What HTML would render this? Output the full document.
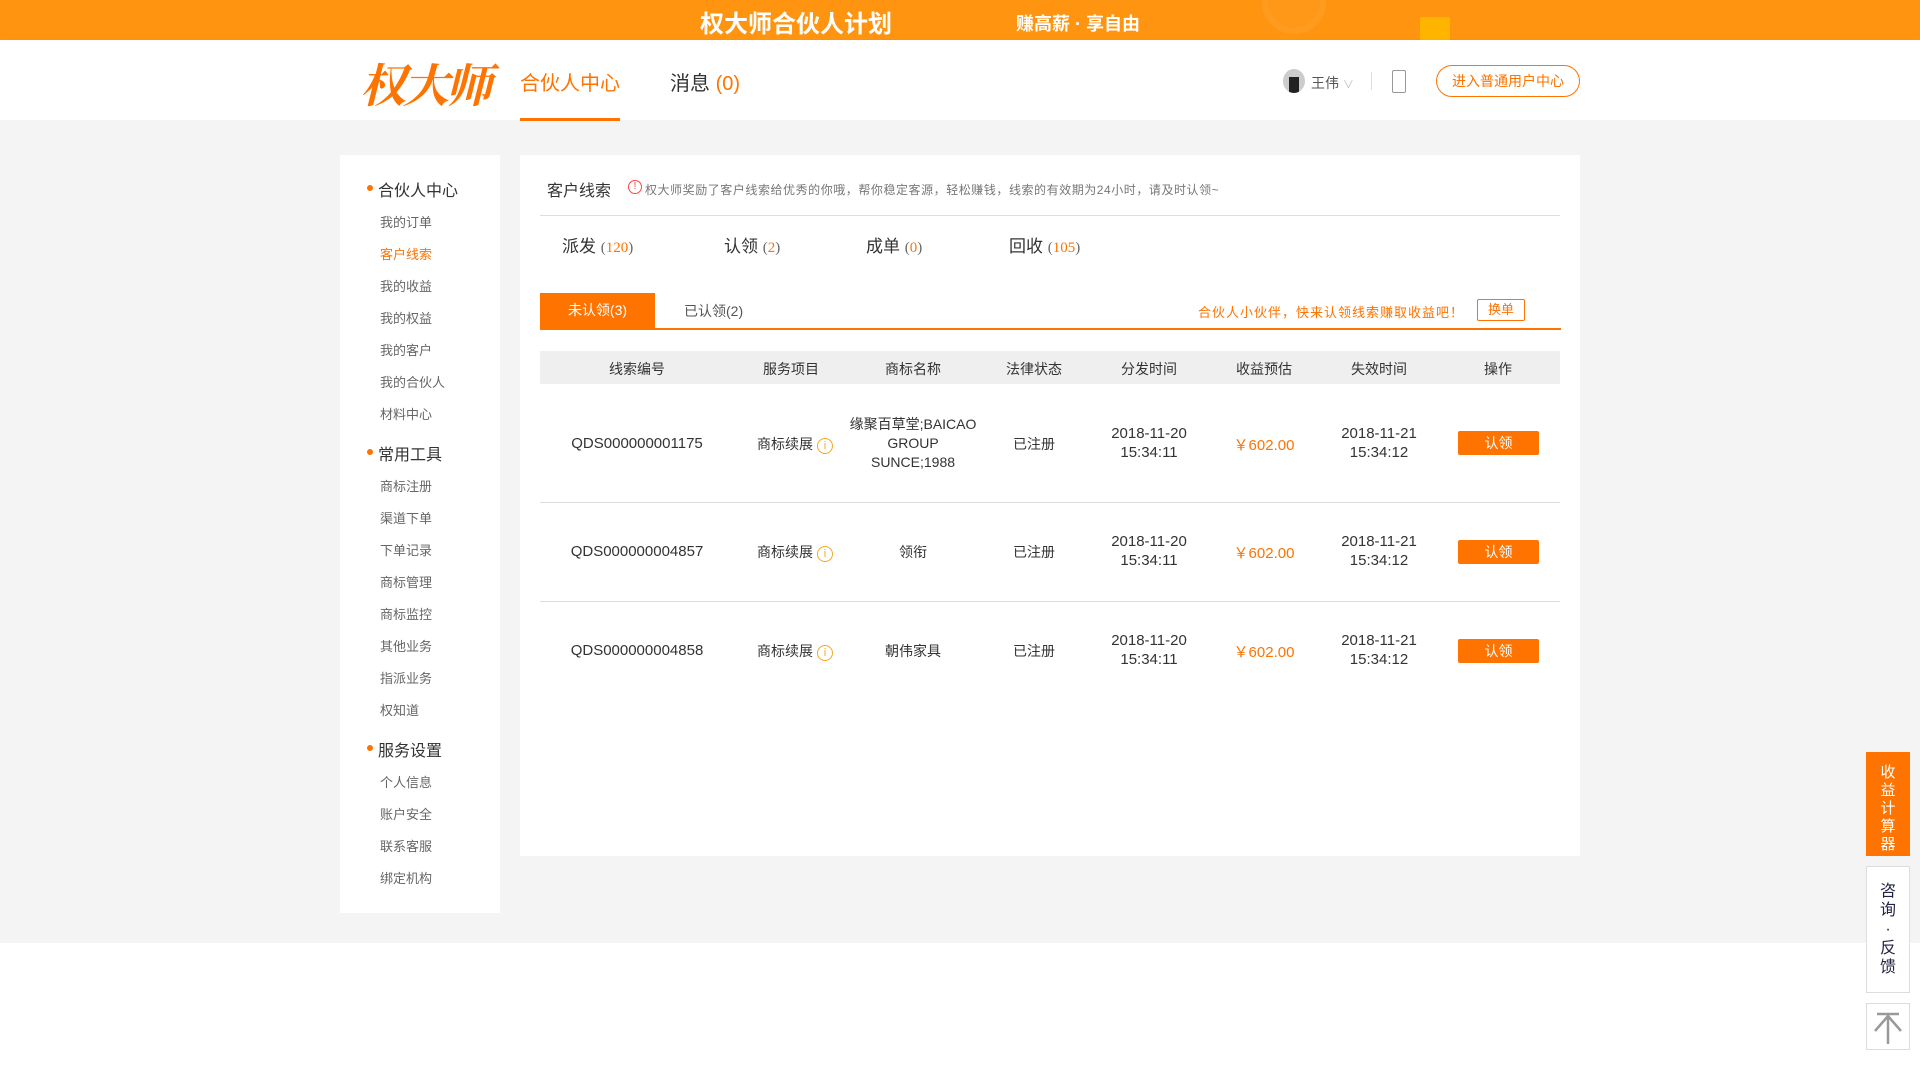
<!DOCTYPE html>
<html><head><meta charset="utf-8"><style>
*{margin:0;padding:0;box-sizing:border-box}
body{width:1920px;height:1080px;position:relative;background:#fff;font-family:"Liberation Sans","Noto Sans CJK SC",sans-serif;color:#333;overflow:hidden}
.a{position:absolute;white-space:nowrap}
.c{position:absolute;transform:translateX(-50%);text-align:center;white-space:nowrap;font-size:14px;color:#333}
.o{color:#ff7300}
.side div{position:absolute;left:380px;font-size:13px;color:#666}
.side .h{left:378px;font-size:16px;color:#333}
.side .h:before{content:"";position:absolute;left:-11px;top:8px;width:6px;height:6px;border-radius:50%;background:#ff7300}
.btn{position:absolute;left:1458px;width:81px;height:24px;background:#ff7300;color:#fff;font-size:14px;text-align:center;line-height:24px;border-radius:2px}
.ic{display:inline-block;width:16px;height:16px;border:1px solid #f5a623;border-radius:50%;color:#f5a623;font-size:11px;line-height:14px;text-align:center;vertical-align:0px;margin-left:4px}
</style></head><body>
<div class="a" style="left:0;top:0;width:1920px;height:40px;background:#ff9410"></div>
<div class="a" style="left:1262px;top:-30px;width:64px;height:64px;border-radius:50%;border:6px solid #ff9c20;background:#ff9818"></div>
<div class="a" style="left:1420px;top:17px;width:30px;height:23px;background:#ffb400;border-radius:2px"></div>
<div class="a" style="left:700px;top:4px;font-size:24px;font-weight:bold;color:#fff">权大师合伙人计划</div>
<div class="a" style="left:1016px;top:10px;font-size:18px;font-weight:bold;color:#fff">赚高薪 · 享自由</div>
<div class="a" style="left:0;top:40px;width:1920px;height:80px;background:#fff;box-shadow:0 2px 4px rgba(0,0,0,.06)"></div>
<div class="a" style="left:360px;top:50px;font-size:46px;font-weight:bold;font-style:italic;color:#ff7300;font-family:'Noto Serif CJK SC',serif;letter-spacing:-3px">权大师</div>
<div class="a o" style="left:520px;top:67px;font-size:20px">合伙人中心</div>
<div class="a" style="left:520px;top:118px;width:100px;height:3px;background:#ff7300"></div>
<div class="a" style="left:670px;top:67px;font-size:20px">消息 <span class="o">(0)</span></div>
<div class="a" style="left:1283px;top:69px;width:22px;height:24px;border-radius:50%;background:#ccc;overflow:hidden"><div style="margin:8px 0 0 6px;width:10px;height:16px;background:#222"></div></div>
<div class="a" style="left:1311px;top:73px;font-size:14px;color:#555">王伟 <span style="color:#bbb;font-size:11px">∨</span></div>
<div class="a" style="left:1371px;top:72px;width:1px;height:18px;background:#ddd"></div>
<div class="a" style="left:1392px;top:70px;width:14px;height:23px;border:1.5px solid #999;border-radius:2px"></div>
<div class="a o" style="left:1436px;top:65px;width:144px;height:32px;border:1px solid #ff7300;border-radius:16px;font-size:14px;text-align:center;line-height:30px">进入普通用户中心</div>
<div class="a" style="left:0;top:121px;width:1920px;height:822px;background:#f4f4f4"></div>
<div class="a" style="left:340px;top:155px;width:160px;height:758px;background:#fff"></div>
<div class="side">
<div class="h" style="top:177px">合伙人中心</div>
<div style="top:212px">我的订单</div><div style="top:244px;color:#ff7300">客户线索</div><div style="top:276px">我的收益</div><div style="top:308px">我的权益</div><div style="top:340px">我的客户</div><div style="top:372px">我的合伙人</div><div style="top:404px">材料中心</div>
<div class="h" style="top:441px">常用工具</div>
<div style="top:476px">商标注册</div><div style="top:508px">渠道下单</div><div style="top:540px">下单记录</div><div style="top:572px">商标管理</div><div style="top:604px">商标监控</div><div style="top:636px">其他业务</div><div style="top:668px">指派业务</div><div style="top:700px">权知道</div>
<div class="h" style="top:737px">服务设置</div>
<div style="top:772px">个人信息</div><div style="top:804px">账户安全</div><div style="top:836px">联系客服</div><div style="top:868px">绑定机构</div>
</div>
<div class="a" style="left:520px;top:155px;width:1060px;height:701px;background:#fff"></div>
<div class="a" style="left:547px;top:177px;font-size:16px;color:#333">客户线索</div>
<div class="a" style="left:628px;top:180px;width:14px;height:14px;border:1px solid #f44;border-radius:50%;color:#f44;font-size:10px;line-height:12px;text-align:center">!</div>
<div class="a" style="left:645px;top:181px;font-size:12px;color:#777;letter-spacing:0.55px">权大师奖励了客户线索给优秀的你哦，帮你稳定客源，轻松赚钱，线索的有效期为24小时，请及时认领~</div>
<div class="a" style="left:540px;top:215px;width:1020px;height:1px;background:#ddd"></div>
<div class="a" style="left:562px;top:232px;font-size:17px">派发 <span class="o" style="font-family:'Liberation Serif',serif;font-size:15px"><span style="color:#666">(</span>120<span style="color:#666">)</span></span></div>
<div class="a" style="left:724px;top:232px;font-size:17px">认领 <span class="o" style="font-family:'Liberation Serif',serif;font-size:15px"><span style="color:#666">(</span>2<span style="color:#666">)</span></span></div>
<div class="a" style="left:866px;top:232px;font-size:17px">成单 <span class="o" style="font-family:'Liberation Serif',serif;font-size:15px"><span style="color:#666">(</span>0<span style="color:#666">)</span></span></div>
<div class="a" style="left:1009px;top:232px;font-size:17px">回收 <span class="o" style="font-family:'Liberation Serif',serif;font-size:15px"><span style="color:#666">(</span>105<span style="color:#666">)</span></span></div>
<div class="a" style="left:540px;top:293px;width:115px;height:35px;background:#ff7300;color:#fff;font-size:14px;text-align:center;line-height:35px">未认领(3)</div>
<div class="a" style="left:684px;top:301px;font-size:14px;color:#555">已认领(2)</div>
<div class="a" style="left:540px;top:328px;width:1021px;height:2px;background:#ff7300"></div>
<div class="a o" style="left:1198px;top:302px;font-size:13px;letter-spacing:1px">合伙人小伙伴，快来认领线索赚取收益吧！</div>
<div class="a o" style="left:1477px;top:299px;width:48px;height:22px;border:1px solid #ff7300;border-radius:2px;font-size:13px;text-align:center;line-height:20px">换单</div>
<div class="a" style="left:540px;top:351px;width:1020px;height:33px;background:#efefef"></div>
<div class="c" style="left:637px;top:359px">线索编号</div><div class="c" style="left:791px;top:359px">服务项目</div><div class="c" style="left:913px;top:359px">商标名称</div><div class="c" style="left:1034px;top:359px">法律状态</div><div class="c" style="left:1149px;top:359px">分发时间</div><div class="c" style="left:1264px;top:359px">收益预估</div><div class="c" style="left:1379px;top:359px">失效时间</div><div class="c" style="left:1498px;top:359px">操作</div>

<div class="c" style="left:637px;top:435px;font-size:15px">QDS000000001175</div>
<div class="c" style="left:795px;top:434px">商标续展<span class="ic">i</span></div>
<div class="c" style="left:913px;top:415px;line-height:19px">缘聚百草堂;BAICAO<br>GROUP<br>SUNCE;1988</div>
<div class="c" style="left:1034px;top:434px">已注册</div>
<div class="c" style="left:1149px;top:424px;line-height:19px;font-size:15px">2018-11-20<br>15:34:11</div>
<div class="c o" style="left:1264px;top:434px;font-size:15px;color:#ff7300">￥602.00</div>
<div class="c" style="left:1379px;top:424px;line-height:19px;font-size:15px">2018-11-21<br>15:34:12</div>
<div class="btn" style="top:431px">认领</div>
<div class="a" style="left:540px;top:502px;width:1020px;height:1px;background:#ddd"></div>

<div class="c" style="left:637px;top:543px;font-size:15px">QDS000000004857</div>
<div class="c" style="left:795px;top:542px">商标续展<span class="ic">i</span></div>
<div class="c" style="left:913px;top:542px">领衔</div>
<div class="c" style="left:1034px;top:542px">已注册</div>
<div class="c" style="left:1149px;top:532px;line-height:19px;font-size:15px">2018-11-20<br>15:34:11</div>
<div class="c o" style="left:1264px;top:542px;font-size:15px;color:#ff7300">￥602.00</div>
<div class="c" style="left:1379px;top:532px;line-height:19px;font-size:15px">2018-11-21<br>15:34:12</div>
<div class="btn" style="top:540px">认领</div>
<div class="a" style="left:540px;top:601px;width:1020px;height:1px;background:#ddd"></div>

<div class="c" style="left:637px;top:642px;font-size:15px">QDS000000004858</div>
<div class="c" style="left:795px;top:641px">商标续展<span class="ic">i</span></div>
<div class="c" style="left:913px;top:641px">朝伟家具</div>
<div class="c" style="left:1034px;top:641px">已注册</div>
<div class="c" style="left:1149px;top:631px;line-height:19px;font-size:15px">2018-11-20<br>15:34:11</div>
<div class="c o" style="left:1264px;top:641px;font-size:15px;color:#ff7300">￥602.00</div>
<div class="c" style="left:1379px;top:631px;line-height:19px;font-size:15px">2018-11-21<br>15:34:12</div>
<div class="btn" style="top:639px">认领</div>

<div class="a" style="left:1866px;top:752px;width:44px;height:104px;background:#ff7300;color:#fff;font-size:15px;line-height:18px;text-align:center;padding-top:12px;white-space:normal">收<br>益<br>计<br>算<br>器</div>
<div class="a" style="left:1866px;top:866px;width:44px;height:127px;background:#fff;border:1px solid #ddd;color:#224;font-size:16px;line-height:19px;text-align:center;padding-top:15px">咨<br>询<br>·<br>反<br>馈</div>
<div class="a" style="left:1866px;top:1003px;width:44px;height:47px;background:#fff;border:1px solid #ddd">
<svg width="42" height="45" viewBox="0 0 42 45"><path d="M10 10H32M21 10V40M21 12L8 27M21 12L34 27" stroke="#999" stroke-width="2.5" fill="none"/></svg></div>
</body></html>
